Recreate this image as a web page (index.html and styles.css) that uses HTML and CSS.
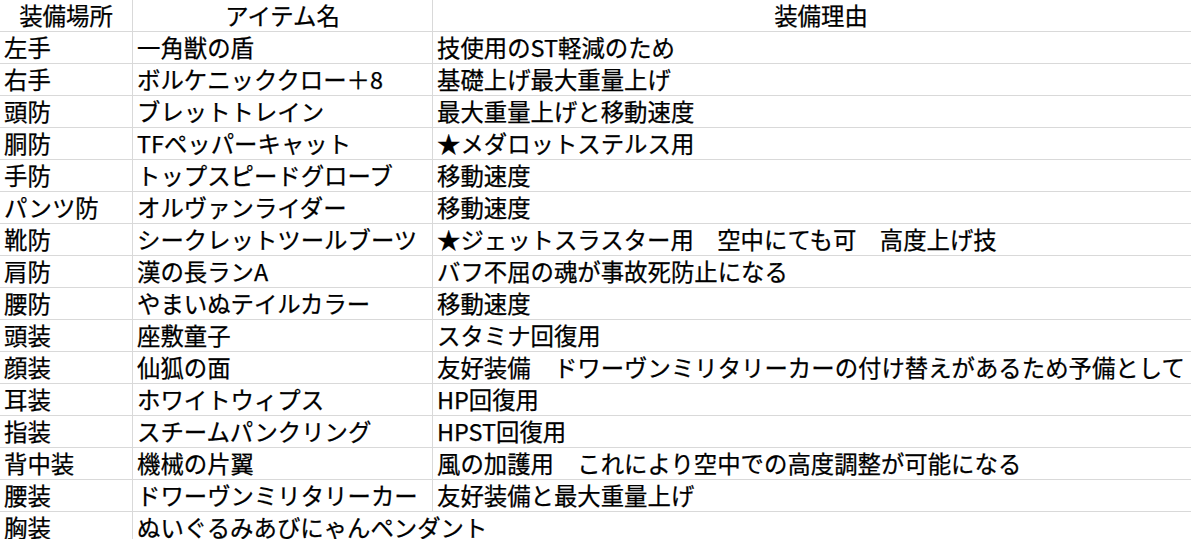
FILE: index.html
```html
<!DOCTYPE html>
<html lang="ja">
<head>
<meta charset="utf-8">
<link rel="stylesheet" href="styles.css">
</head>
<body>
<table class="sheet">
<colgroup><col class="c1"><col class="c2"><col class="c3"></colgroup>
<thead>
<tr><th>装備場所</th><th>アイテム名</th><th>装備理由</th></tr>
</thead>
<tbody>
<tr><td>左手</td><td>一角獣の盾</td><td>技使用のST軽減のため</td></tr>
<tr><td>右手</td><td>ボルケニッククロー＋8</td><td>基礎上げ最大重量上げ</td></tr>
<tr><td>頭防</td><td>ブレットトレイン</td><td>最大重量上げと移動速度</td></tr>
<tr><td>胴防</td><td>TFペッパーキャット</td><td>★メダロットステルス用</td></tr>
<tr><td>手防</td><td>トップスピードグローブ</td><td>移動速度</td></tr>
<tr><td>パンツ防</td><td>オルヴァンライダー</td><td>移動速度</td></tr>
<tr><td>靴防</td><td>シークレットツールブーツ</td><td>★ジェットスラスター用　空中にても可　高度上げ技</td></tr>
<tr><td>肩防</td><td>漢の長ランA</td><td>バフ不屈の魂が事故死防止になる</td></tr>
<tr><td>腰防</td><td>やまいぬテイルカラー</td><td>移動速度</td></tr>
<tr><td>頭装</td><td>座敷童子</td><td>スタミナ回復用</td></tr>
<tr><td>顔装</td><td>仙狐の面</td><td>友好装備　ドワーヴンミリタリーカーの付け替えがあるため予備として</td></tr>
<tr><td>耳装</td><td>ホワイトウィプス</td><td>HP回復用</td></tr>
<tr><td>指装</td><td>スチームパンクリング</td><td>HPST回復用</td></tr>
<tr><td>背中装</td><td>機械の片翼</td><td>風の加護用　これにより空中での高度調整が可能になる</td></tr>
<tr><td>腰装</td><td>ドワーヴンミリタリーカー</td><td>友好装備と最大重量上げ</td></tr>
<tr class="last"><td>胸装</td><td class="spill">ぬいぐるみあびにゃんペンダント</td><td></td></tr>
</tbody>
</table>
</body>
</html>
```

FILE: styles.css
```css
html, body {
  margin: 0;
  padding: 0;
  background: #ffffff;
  overflow: hidden;
}

.sheet {
  table-layout: fixed;
  border-collapse: separate;
  border-spacing: 0;
  width: 1210px;
  font-family: "Noto Sans CJK JP", "Noto Sans", sans-serif;
  font-size: 23.4px;
  color: #000000;
  -webkit-text-stroke: 0.25px #000000;
}

.c1 { width: 133px; }
.c2 { width: 300px; }
.c3 { width: 777px; }

.sheet th,
.sheet td {
  padding: 0 0 0 4px;
  height: 31px;
  line-height: 31px;
  border-right: 1px solid #d9d9d9;
  border-bottom: 1px solid #d9d9d9;
  white-space: nowrap;
  overflow: visible;
  text-align: left;
  font-weight: normal;
  vertical-align: middle;
}

.sheet th {
  text-align: center;
  padding: 0;
}

.sheet td.spill {
  border-right-color: transparent;
}
```
